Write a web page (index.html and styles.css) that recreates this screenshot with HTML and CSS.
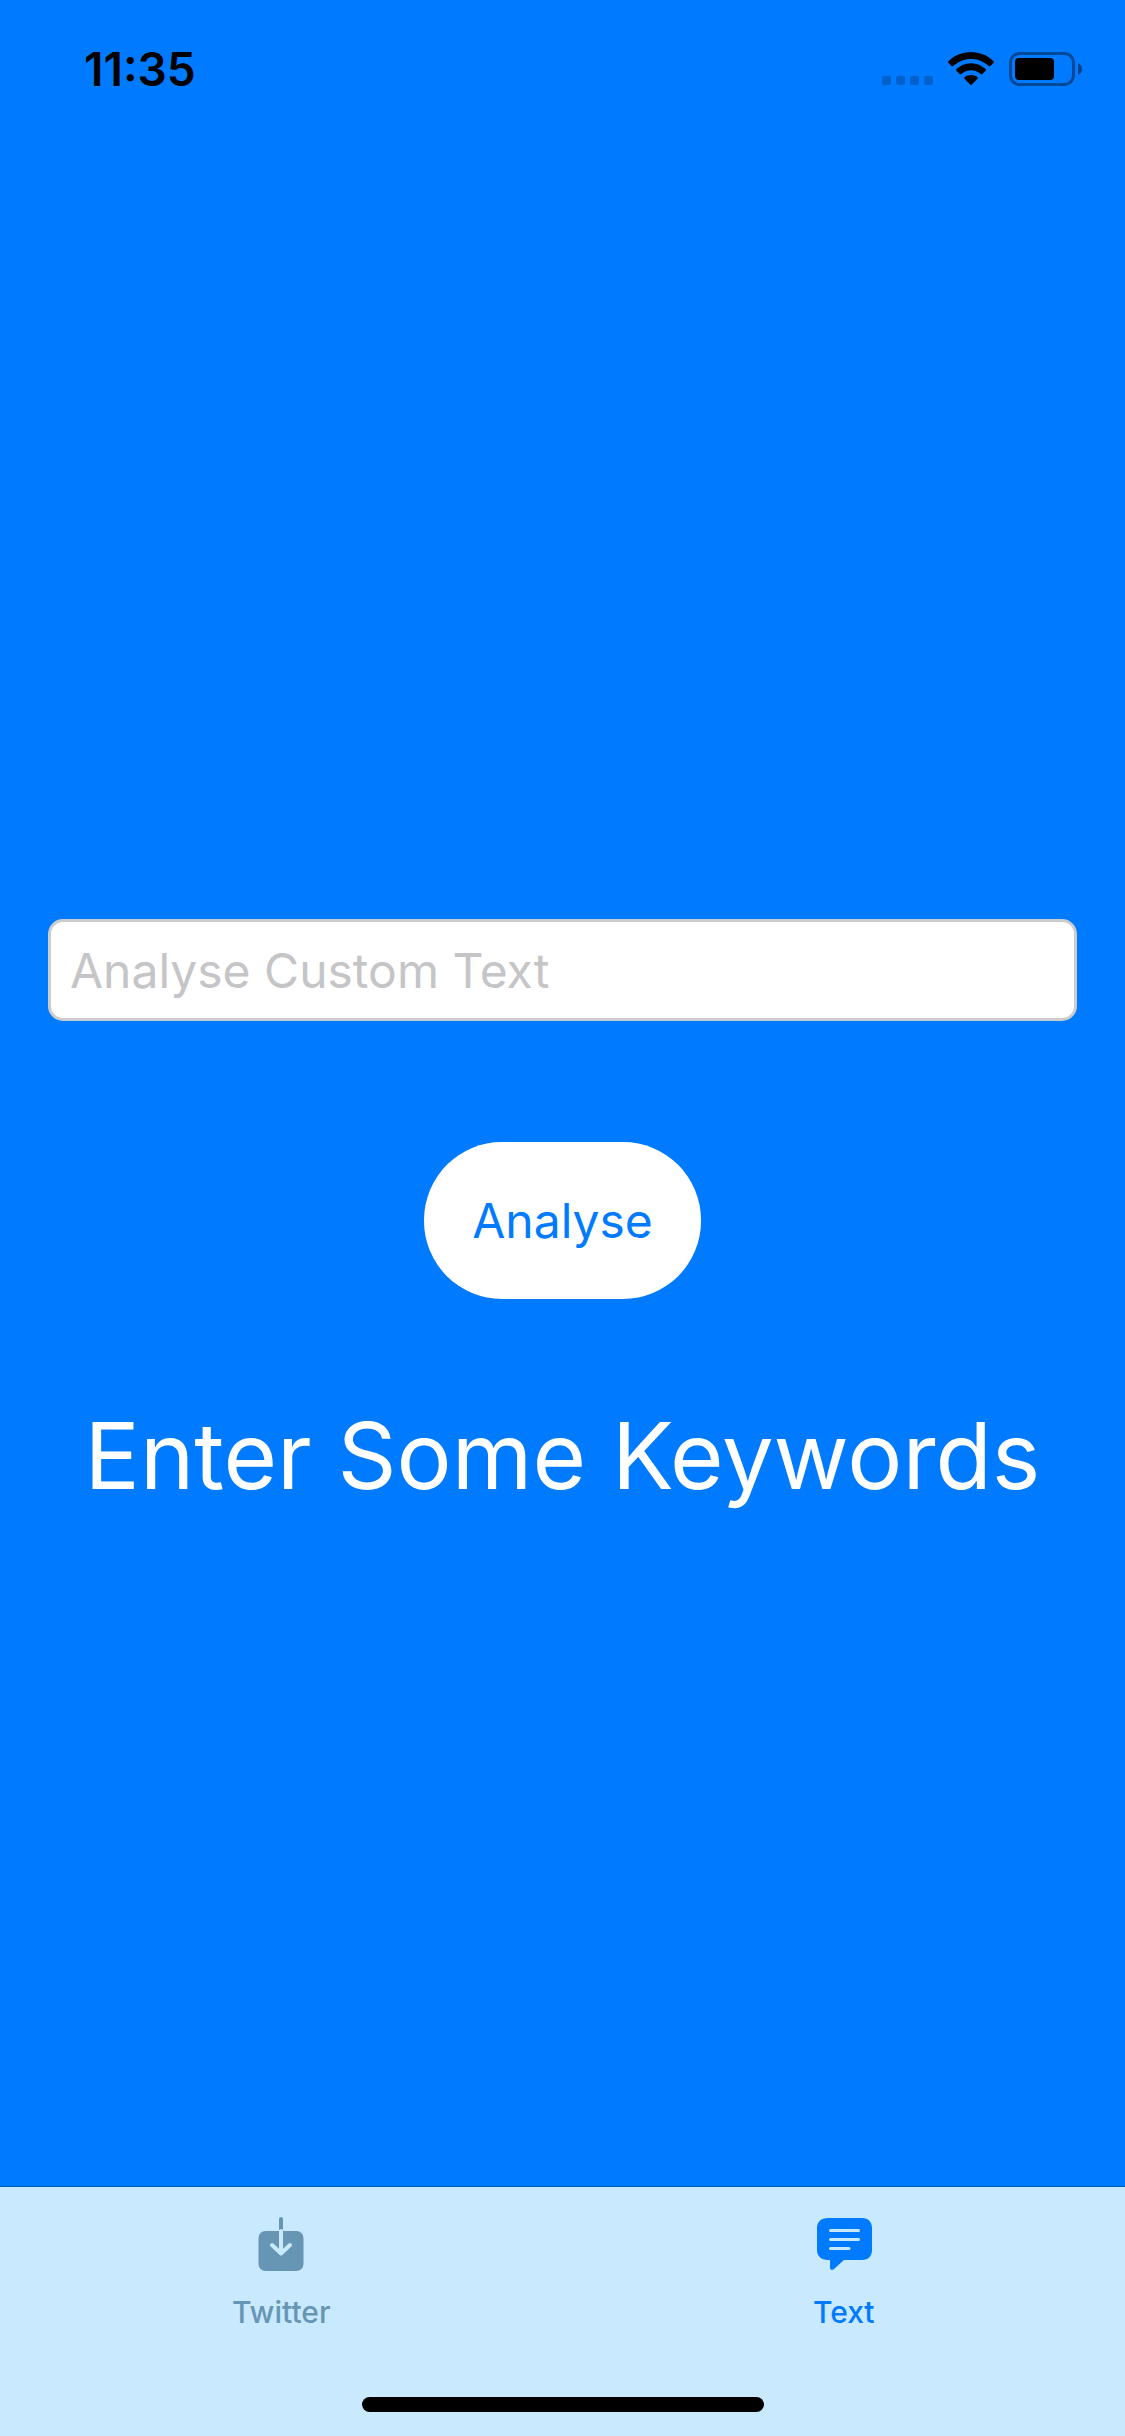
FILE: index.html
```html
<!DOCTYPE html>
<html lang="en">
<head>
<meta charset="utf-8">
<meta name="viewport" content="width=device-width, initial-scale=1">
<title>Analyse</title>
<link rel="stylesheet" href="styles.css">
</head>
<body>
<div class="screen">
  <header class="status-bar">
    <time class="clock">11:35</time>
    <div class="indicators">
      <svg class="icon-signal" width="51" height="34" viewBox="0 0 51 34" aria-hidden="true">
        <g fill="#000" fill-opacity="0.2">
          <rect x="0" y="24" width="9" height="9" rx="2"/>
          <rect x="14" y="24" width="9" height="9" rx="2"/>
          <rect x="28" y="24" width="9" height="9" rx="2"/>
          <rect x="42" y="24" width="9" height="9" rx="2"/>
        </g>
      </svg>
      <svg class="icon-wifi" width="46" height="34" viewBox="0 0 46 34" aria-hidden="true">
        <path d="M23 0C14.300 0 6.200 3.500.4 9.200c-.5.500-.5 1.200 0 1.600l3.200 3.300c.5.500 1.200.5 1.700 0C9.900 9.700 16.100 7 23 7s13.100 2.700 17.700 7.100c.5.500 1.200.5 1.700 0l3.200-3.300c.5-.4.5-1.100 0-1.600C39.800 3.500 31.700 0 23 0z"/>
        <path d="M23 11.300c-5.700 0-10.800 2.200-14.600 5.800-.5.500-.5 1.100 0 1.600l3.300 3.300c.5.500 1.100.5 1.600 0 2.600-2.300 6-3.700 9.700-3.700s7.100 1.400 9.700 3.700c.5.500 1.100.5 1.600 0l3.300-3.300c.5-.5.5-1.100 0-1.600-3.800-3.600-8.900-5.800-14.600-5.800z"/>
        <path d="M23 23c-2.400 0-4.700.8-6.500 2.200-.5.400-.5 1 0 1.500l5.700 5.800c.5.500 1.100.5 1.600 0l5.700-5.800c.5-.5.5-1.100 0-1.500C27.700 23.800 25.400 23 23 23z"/>
      </svg>
      <svg class="icon-battery" width="74" height="34" viewBox="0 0 74 34" aria-hidden="true">
        <rect x="1.500" y="1.500" width="63" height="31" rx="9" fill="none" stroke="#000" stroke-opacity="0.4" stroke-width="3"/>
        <path d="M69 11c2.400 1 4 3.300 4 6s-1.600 5-4 6z" fill-opacity="0.45"/>
        <rect x="6" y="6" width="39" height="22" rx="4"/>
      </svg>
    </div>
  </header>

  <main class="content">
    <form class="analyse-form" onsubmit="return false">
      <input class="keyword-input" type="text" placeholder="Analyse Custom Text" aria-label="Analyse Custom Text">
      <button class="analyse-button" type="submit">Analyse</button>
    </form>
    <h1 class="result">Enter Some Keywords</h1>
  </main>

  <footer class="tab-bar">
    <nav class="tabs">
      <a class="tab" href="#twitter">
        <svg width="46" height="56" viewBox="0 0 46 56" aria-hidden="true">
          <rect x="0.500" y="15" width="45" height="40" rx="7" fill="currentColor"/>
          <path d="M23 3v12" fill="none" stroke="currentColor" stroke-width="4" stroke-linecap="round"/>
          <path d="M23 15v22M14 29l9 8.500L32 29" fill="none" stroke="#c9e9ff" stroke-width="4" stroke-linecap="round" stroke-linejoin="round"/>
        </svg>
        <span class="tab-label">Twitter</span>
      </a>
      <a class="tab tab-active" href="#text" aria-current="page">
        <svg width="56" height="56" viewBox="-1 0 56 56" aria-hidden="true">
          <path d="M11 2h34c6.500 0 10 4 10 10v22c0 6-3.500 10-10 10H27L17 53c-2 1.500-4 1-4-1.500V44h-2C4 44 0 40 0 34V12C0 6 4 2 11 2z" fill="currentColor"/>
          <path d="M13.500 14.500h28M13.500 23.500h28M13.500 32.500h18.500" fill="none" stroke="#c9e9ff" stroke-width="3" stroke-linecap="round"/>
        </svg>
        <span class="tab-label">Text</span>
      </a>
    </nav>
    <div class="home-indicator"></div>
  </footer>
</div>
</body>
</html>
```
FILE: styles.css
```css
* {
  box-sizing: border-box;
}

body {
  margin: 0;
  font-family: Inter, "Liberation Sans", sans-serif;
  background: #007aff;
}

.screen {
  display: flex;
  flex-direction: column;
  min-height: 100vh;
}

/* Same height as the tab bar, so the content is centred on the screen */
.status-bar {
  display: flex;
  justify-content: space-between;
  align-items: flex-start;
  min-height: 250px;
  padding: 42px 42px 0 84px;
}

.clock {
  font-size: 46px;
  font-weight: 600;
  line-height: 54px;
}

.indicators {
  display: flex;
  gap: 15px;
  padding-top: 10px;
}

.content {
  display: flex;
  flex: 1;
  flex-direction: column;
  justify-content: center;
  gap: 96px;
  padding: 0 48px;
}

.analyse-form {
  display: flex;
  flex-direction: column;
  align-items: center;
  gap: 121px;
}

.keyword-input {
  width: 100%;
  height: 102px;
  padding: 0 19px;
  border: 3px solid #cccccc;
  border-radius: 15px;
  background: #fff;
  color: #000;
  font: inherit;
  font-size: 48px;
}

.keyword-input::placeholder {
  color: #c5c5c7;
  opacity: 1;
}

.analyse-button {
  padding: 48px;
  border: 0;
  border-radius: 78px;
  background: #fff;
  color: #007aff;
  font: inherit;
  font-size: 48px;
  line-height: 61px;
}

.result {
  margin: 0;
  color: #fff;
  font-size: 92px;
  font-weight: 400;
  line-height: 122px;
  text-align: center;
}

.tab-bar {
  display: flex;
  flex-direction: column;
  align-items: center;
  justify-content: space-between;
  min-height: 250px;
  padding-bottom: 24px;
  border-top: 1px solid #0060b8;
  background: #c9e9ff;
}

.tabs {
  display: flex;
  width: 100%;
}

.tab {
  display: flex;
  flex: 1;
  flex-direction: column;
  align-items: center;
  gap: 22px;
  padding-top: 29px;
  color: #6796b5;
  text-decoration: none;
}

.tab-active {
  color: #007aff;
}

.tab-label {
  font-size: 30px;
  font-weight: 500;
  line-height: 36px;
}

.home-indicator {
  width: 402px;
  max-width: 60%;
  height: 15px;
  border-radius: 8px;
  background: #000;
}
```
